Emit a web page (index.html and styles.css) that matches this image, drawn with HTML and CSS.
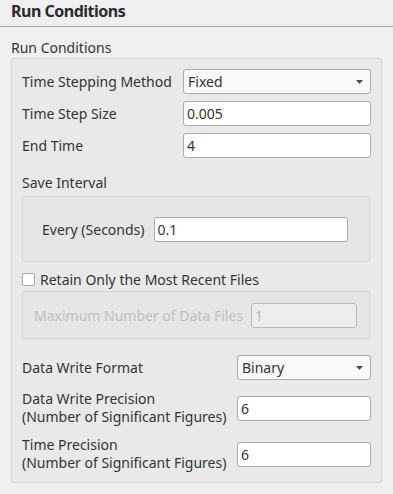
FILE: index.html
```html
<!DOCTYPE html>
<html lang="en">
<head>
<meta charset="UTF-8">
<meta name="viewport" content="width=device-width, initial-scale=1.0">
<title>Run Conditions</title>
<link rel="stylesheet" href="styles.css">
</head>
<body>
    <div class="panel">
        <h1 class="title">Run Conditions</h1>
        <div class="section-name">Run Conditions</div>

        <div class="group">
            <div class="form form-top">
                <label>Time Stepping Method</label>
                <div class="combo">
                    <span>Fixed</span>
                    <svg class="arrow" width="7" height="4" viewBox="0 0 7 4"><path d="M0 0 H7 L3.5 4 Z" fill="#4a4a4a"/></svg>
                </div>
                <label>Time Step Size</label>
                <input type="text" class="field" value="0.005">
                <label>End Time</label>
                <input type="text" class="field" value="4">
            </div>

            <div class="sub-title">Save Interval</div>
            <div class="box box-interval">
                <label>Every (Seconds)</label>
                <input type="text" class="field field-interval" value="0.1">
            </div>

            <label class="check-row">
                <span class="checkbox"></span>
                <span>Retain Only the Most Recent Files</span>
            </label>
            <div class="box box-files">
                <label class="disabled">Maximum Number of Data Files</label>
                <input type="text" class="field field-disabled" value="1" disabled>
            </div>

            <div class="form form-bottom">
                <label>Data Write Format</label>
                <div class="combo">
                    <span>Binary</span>
                    <svg class="arrow" width="7" height="4" viewBox="0 0 7 4"><path d="M0 0 H7 L3.5 4 Z" fill="#4a4a4a"/></svg>
                </div>
                <label>Data Write Precision<br>(Number of Significant Figures)</label>
                <input type="text" class="field" value="6">
                <label>Time Precision<br>(Number of Significant Figures)</label>
                <input type="text" class="field" value="6">
            </div>
        </div>
    </div>
</body>
</html>
```

FILE: styles.css
```css
body {
    margin: 0;
    background-color: #efefef;
    font-family: "Noto Sans", "DejaVu Sans", sans-serif;
    font-size: 14px;
    color: #333333;
}
.panel {
    width: 393px;
    height: 494px;
    overflow: hidden;
}
.title {
    margin: 0;
    height: 26px;
    padding-left: 11px;
    font-size: 16px;
    font-weight: bold;
    letter-spacing: -0.5px;
    line-height: 22px;
    color: #2a2a2a;
    border-bottom: 1px solid #a6a6a6;
}
.section-name {
    padding-left: 11px;
    margin-top: 11px;
    line-height: 20px;
    height: 20px;
}
label {
    white-space: nowrap;
}
.group {
    margin: 0 0 0 11px;
    width: 349px;
    height: 413px;
    padding: 10px 10px 0 10px;
    background-color: #e9e9e9;
    border: 1px solid #d6d6d6;
    border-radius: 2px;
}
.form {
    display: grid;
    align-items: center;
}
.form-top {
    grid-template-columns: 161px 188px;
    row-gap: 7px;
}
.form-bottom {
    grid-template-columns: 215px 134px;
    row-gap: 10px;
    margin-top: 16px;
}
.form-bottom label {
    line-height: 18px;
}
.field,
.combo {
    box-sizing: border-box;
    height: 25px;
    margin: 0;
    padding: 0 3px;
    font-family: inherit;
    font-size: 14px;
    color: #333333;
    background-color: #ffffff;
    border: 1px solid #ababab;
    border-radius: 3px;
    outline: none;
}
.combo {
    display: flex;
    align-items: center;
    justify-content: space-between;
    padding: 0 7px 0 4px;
    background-color: #f8f8f8;
}
.sub-title {
    margin-top: 16px;
    line-height: 17px;
    height: 17px;
}
.box {
    box-sizing: border-box;
    width: 348px;
    display: flex;
    align-items: center;
    background-color: #e6e6e6;
    border: 1px solid #d4d4d4;
    border-radius: 2px;
}
.box-interval {
    margin-top: 5px;
    height: 66px;
    padding: 0 21px 0 19px;
    gap: 9px;
}
.field-interval {
    flex: 1;
    min-width: 0;
}
.check-row {
    display: flex;
    align-items: center;
    gap: 5px;
    height: 19px;
    margin-top: 8px;
}
.checkbox {
    box-sizing: border-box;
    width: 13px;
    height: 13px;
    background-color: #ffffff;
    border: 1px solid #aaaaaa;
    border-radius: 2px;
}
.box-files {
    margin-top: 2px;
    height: 48px;
    padding: 0 12px 0 11px;
    gap: 7px;
}
.disabled {
    flex: 1;
    color: #c0c0c0;
}
.field-disabled {
    width: 106px;
    color: #bdbdbd;
    background-color: #ececec;
    border-color: #b9b9b9;
}
```
